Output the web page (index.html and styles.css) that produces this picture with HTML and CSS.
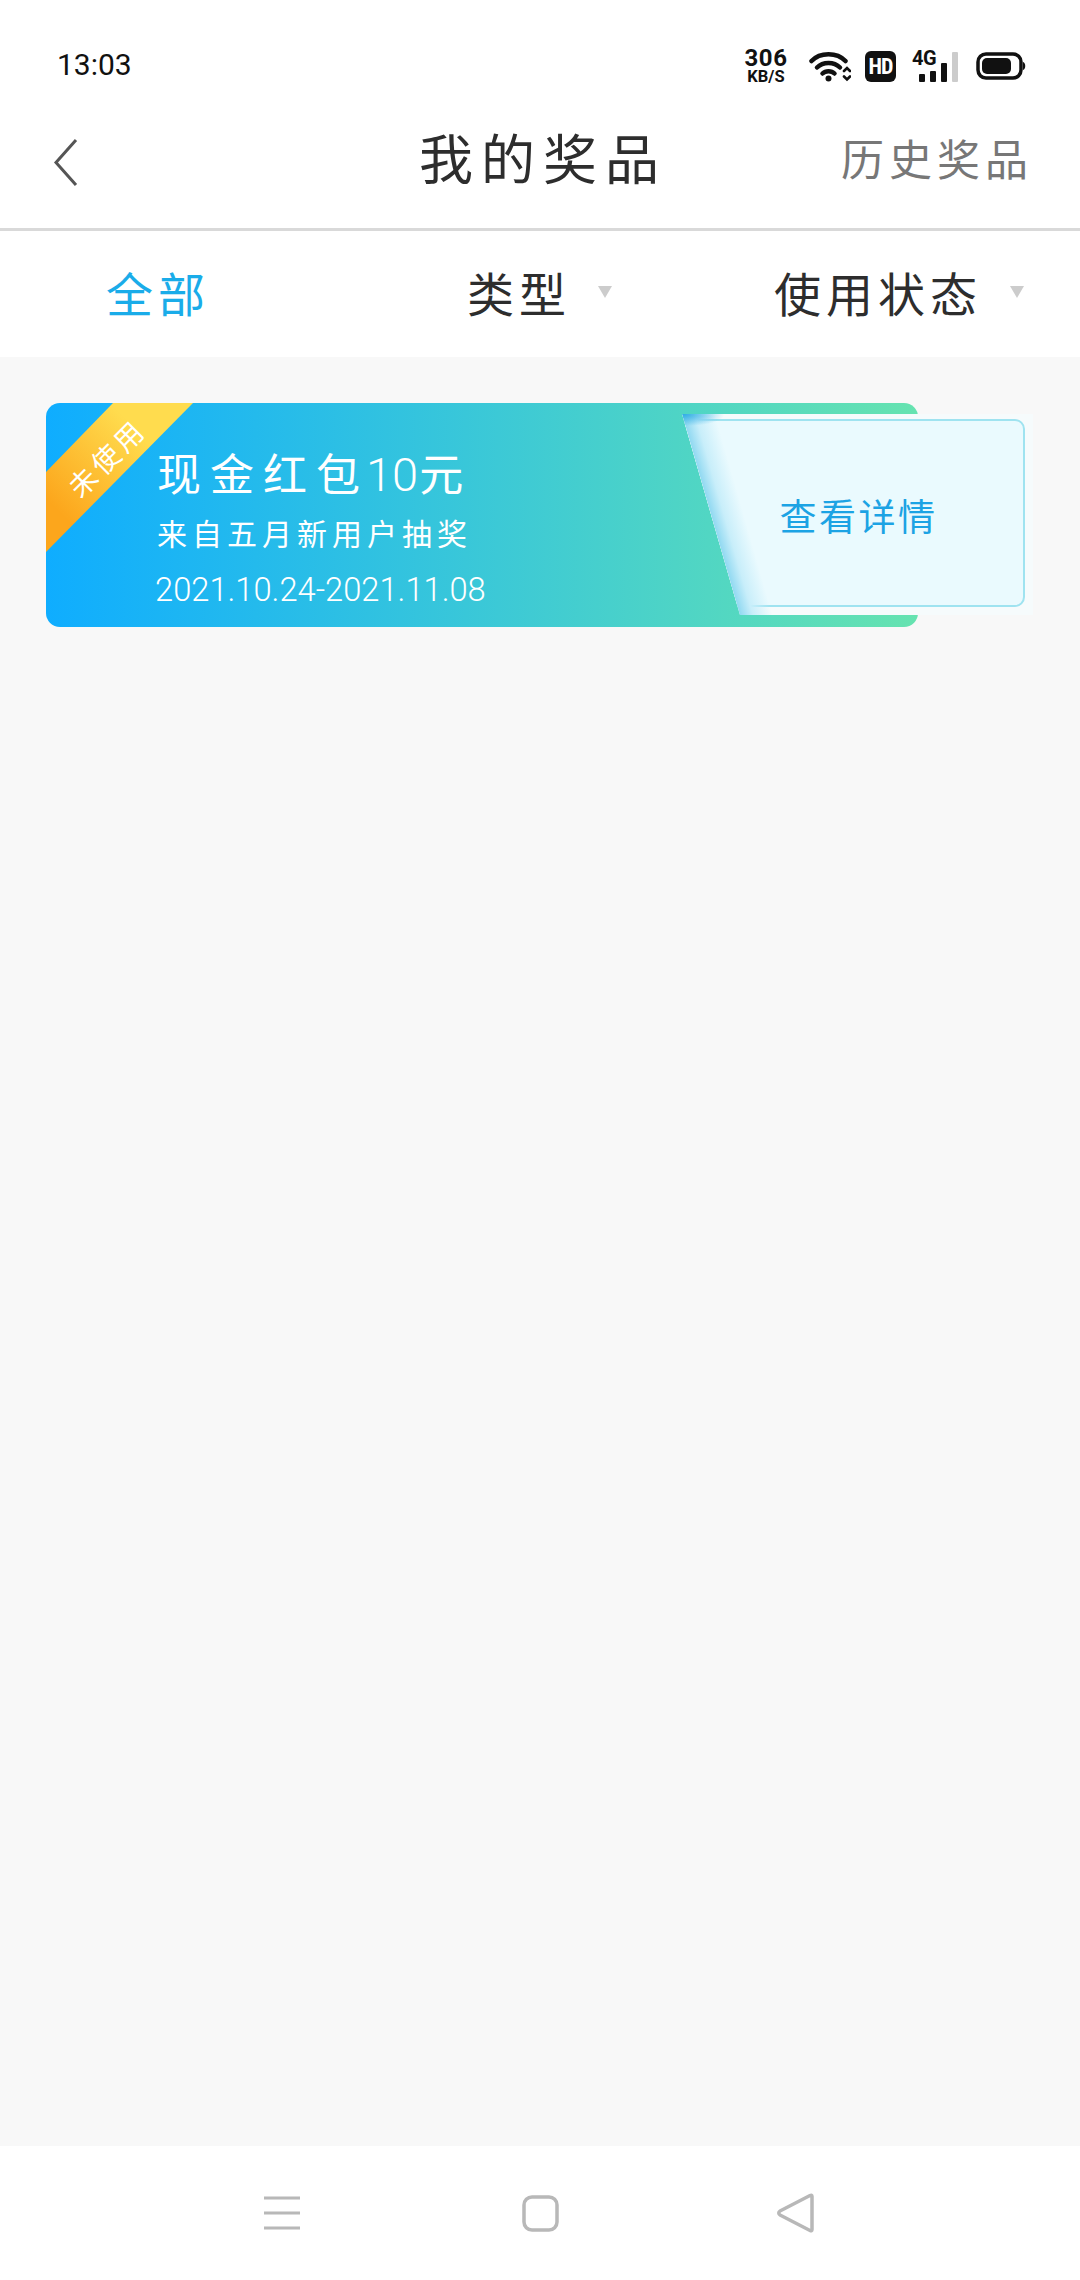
FILE: index.html
```html
<!DOCTYPE html>
<html lang="zh-CN">
<head>
<meta charset="utf-8">
<title>我的奖品</title>
<link rel="stylesheet" href="styles.css">
</head>
<body>
<div class="app">
  <div class="status">
    <span class="clock">13:03</span>
    <div class="status-icons">
      <div class="speed"><span class="speed-num">306</span><span class="speed-unit">KB/S</span></div>
      <svg class="wifi" width="42" height="30" viewBox="0 0 42 30" fill="none" stroke="#111" stroke-width="4.500" stroke-linecap="round">
        <path d="M2.500 9C11 0 28 0 36.500 9"/>
        <path d="M8 15.500C14 9.500 25 9.500 31 15.500"/>
        <path d="M13.500 21.500C16.500 18.500 22.500 18.500 25.500 21.500"/>
        <circle cx="19.500" cy="26.500" r="3" fill="#111" stroke="none"/>
        <path d="M35 19l3-3 3 3M35 24.500l3 3 3-3" stroke-width="2.600"/>
      </svg>
      <span class="hd">HD</span>
      <div class="signal">
        <span class="net">4G</span>
        <span class="bar bar-1"></span>
        <span class="bar bar-2"></span>
        <span class="bar bar-3"></span>
        <span class="bar bar-4"></span>
      </div>
      <svg class="battery" width="50" height="28" viewBox="0 0 50 28">
        <rect x="2" y="2" width="43" height="24" rx="8" fill="none" stroke="#111" stroke-width="3.500"/>
        <rect x="6" y="6" width="29" height="16" rx="5" fill="#111"/>
        <path d="M47 10c3 1 3 7 0 8z" fill="#111"/>
      </svg>
    </div>
  </div>

  <header class="topbar">
    <svg class="back" width="25" height="49" viewBox="0 0 25 49" fill="none" stroke="#555" stroke-width="3"><path d="M23 2L3 24.500 23 47"/></svg>
    <h1 class="title">我的奖品</h1>
    <span class="history">历史奖品</span>
  </header>

  <nav class="filters">
    <span class="filter filter-active">全部</span>
    <span class="filter">类型<i class="caret"></i></span>
    <span class="filter filter-wide">使用状态<i class="caret"></i></span>
  </nav>

  <main class="list">
    <article class="prize">
      <div class="ribbon"><span class="ribbon-text">未使用</span></div>
      <div class="prize-body">
        <div class="prize-name">现金红包<span class="prize-num">10</span>元</div>
        <div class="prize-from">来自五月新用户抽奖</div>
        <div class="prize-date">2021.10.24-2021.11.08</div>
      </div>
      <div class="detail">
        <div class="detail-frame"></div>
        <div class="detail-shade"></div>
        <span class="detail-text">查看详情</span>
      </div>
    </article>
  </main>

  <footer class="navbar">
    <svg width="36" height="34" viewBox="0 0 36 34" stroke="#b8b8b8" stroke-width="3"><path d="M0 2h36M0 17h36M0 32h36"/></svg>
    <svg width="37" height="37" viewBox="0 0 37 37" fill="none" stroke="#b8b8b8" stroke-width="3.500"><rect x="2" y="2" width="33" height="33" rx="8"/></svg>
    <svg width="37" height="40" viewBox="0 0 37 40" fill="none" stroke="#b8b8b8" stroke-width="3.500" stroke-linejoin="round"><path d="M35 3.500Q35 1.500 33 2.500L3 18Q0.500 20 3 22L33 37.500Q35 38.500 35 36.500Z"/></svg>
  </footer>
</div>
</body>
</html>
```

FILE: styles.css
```css
* { box-sizing: border-box; }
html, body { margin: 0; padding: 0; background: #fff; }
body { font-family: "Noto Sans CJK SC", "Noto Sans", sans-serif; }
.app { width: 1080px; height: 2280px; display: flex; flex-direction: column; overflow: hidden; }

/* status bar */
.status { height: 110px; flex: none; display: flex; align-items: flex-start; justify-content: space-between; padding: 48px 54px 0 57px; }
.clock { font-family: Roboto, sans-serif; font-size: 30px; line-height: 34px; color: #111; }
.status-icons { display: flex; align-items: flex-start; }
.speed { width: 44px; margin-right: 21px; display: flex; flex-direction: column; align-items: center; font-family: Roboto, sans-serif; font-weight: 700; color: #111; }
.speed-num { font-size: 24px; line-height: 21px; letter-spacing: 0.5px; }
.speed-unit { font-size: 16.500px; line-height: 16px; }
.wifi { margin: 4px 14px 0 0; }
.hd { width: 31px; height: 31px; margin: 3px 17px 0 0; border-radius: 6px; background: #111; color: #fff; font: 700 22px/31px "Roboto Condensed", Roboto, sans-serif; letter-spacing: -1px; text-align: center; }
.signal { width: 45px; height: 31px; margin: 3px 18px 0 0; position: relative; }
.net { position: absolute; left: -1px; top: -4px; font: 700 20px/22px Roboto, sans-serif; letter-spacing: -0.5px; color: #111; }
.bar { position: absolute; bottom: 0; width: 6px; border-radius: 1px; background: #111; }
.bar-1 { left: 6px; height: 8px; }
.bar-2 { left: 17px; height: 11px; }
.bar-3 { left: 28px; height: 19px; }
.bar-4 { left: 39px; height: 30px; background: #ccc; }
.battery { margin-top: 4px; }

/* header */
.topbar { height: 121px; flex: none; position: relative; border-bottom: 3px solid #d9d9d9; display: flex; align-items: center; justify-content: space-between; padding: 0 52px 0 53px; }
.back { margin-top: -14px; }
.title { position: absolute; left: 419px; top: 8px; margin: 0; font-size: 54px; line-height: 78px; font-weight: 400; letter-spacing: 8px; color: #2d2d2d; }
.history { margin-top: -24px; font-size: 43px; line-height: 60px; letter-spacing: 5px; color: #777; margin-right: -5px; }

/* filters */
.filters { height: 126px; flex: none; display: grid; grid-template-columns: 361px 307px 1fr; align-items: center; padding: 0 0 4px 106px; }
.filter { display: flex; align-items: center; font-size: 47px; line-height: 66px; letter-spacing: 5px; color: #2d2d2d; }
.filter-active { color: #1aace9; }
.caret { width: 0; height: 0; margin: 0 0 0 27px; border-left: 7.500px solid transparent; border-right: 7.500px solid transparent; border-top: 12px solid #cccccc; }
.filter-wide .caret { margin-left: 28px; }

/* list */
.list { flex: 1; background: #f8f8f8; padding: 46px 162px 0 46px; }
.prize { position: relative; height: 224px; border-radius: 14px; background: linear-gradient(90deg, #0fadff 0%, #66e3b0 100%); color: #fff; }
.ribbon { position: absolute; left: 0; top: 0; width: 147px; height: 149px; border-top-left-radius: 14px; clip-path: polygon(67px 0, 147px 0, 0 149px, 0 69px); background: linear-gradient(45deg, #fca61c 18%, #ffdc4e 72%); }
.ribbon-text { position: absolute; left: 12px; top: 37px; width: 96px; text-align: center; transform: rotate(-45deg); font-size: 28px; line-height: 34px; letter-spacing: 4px; white-space: nowrap; }
.prize-body { padding: 37px 0 0 111px; }
.prize-name { height: 64px; font-size: 44px; line-height: 64px; letter-spacing: 9px; white-space: nowrap; }
.prize-num { font-family: Roboto, sans-serif; font-weight: 300; letter-spacing: 0; font-size: 47px; margin: 0 1px 0 -3px; }
.prize-from { margin-top: 6px; height: 44px; font-size: 30px; line-height: 44px; letter-spacing: 5px; white-space: nowrap; }
.prize-date { margin: 15px 0 0 -2px; font-family: Roboto, sans-serif; font-weight: 300; font-size: 32.700px; line-height: 42px; white-space: nowrap; }

.detail { position: absolute; left: 636px; top: 11px; width: 351px; height: 201px; display: flex; align-items: center; justify-content: center; clip-path: polygon(0 0, 100% 0, 100% 100%, 58px 100%); background: #f6fbfc; }
.detail-frame { position: absolute; left: 0; right: 8px; top: 5px; bottom: 8px; border: 2px solid #9fe3f0; border-radius: 10px; background: #eafafe; }
.detail-shade { position: absolute; left: 0; top: 0; width: 60px; height: 201px; transform-origin: 0 0; transform: skewX(16deg); background: radial-gradient(ellipse 42px 12px at 0 0, rgba(40, 170, 228, 0.95) 0, rgba(47, 178, 230, 0) 100%), linear-gradient(90deg, #8fd8f1 0%, #c8eefa 22%, rgba(234, 250, 254, 0) 55%); }
.detail-text { position: relative; margin: 0 21px 0 23px; font-size: 37px; line-height: 52px; letter-spacing: 2.500px; color: #1ca3e4; }

/* nav bar */
.navbar { height: 134px; flex: none; background: #fff; display: grid; grid-template-columns: 264px 36px 222px 37px 218px 37px 1fr; align-items: center; }
.navbar svg:nth-child(1) { grid-column: 2; }
.navbar svg:nth-child(2) { grid-column: 4; }
.navbar svg:nth-child(3) { grid-column: 6; }
```
